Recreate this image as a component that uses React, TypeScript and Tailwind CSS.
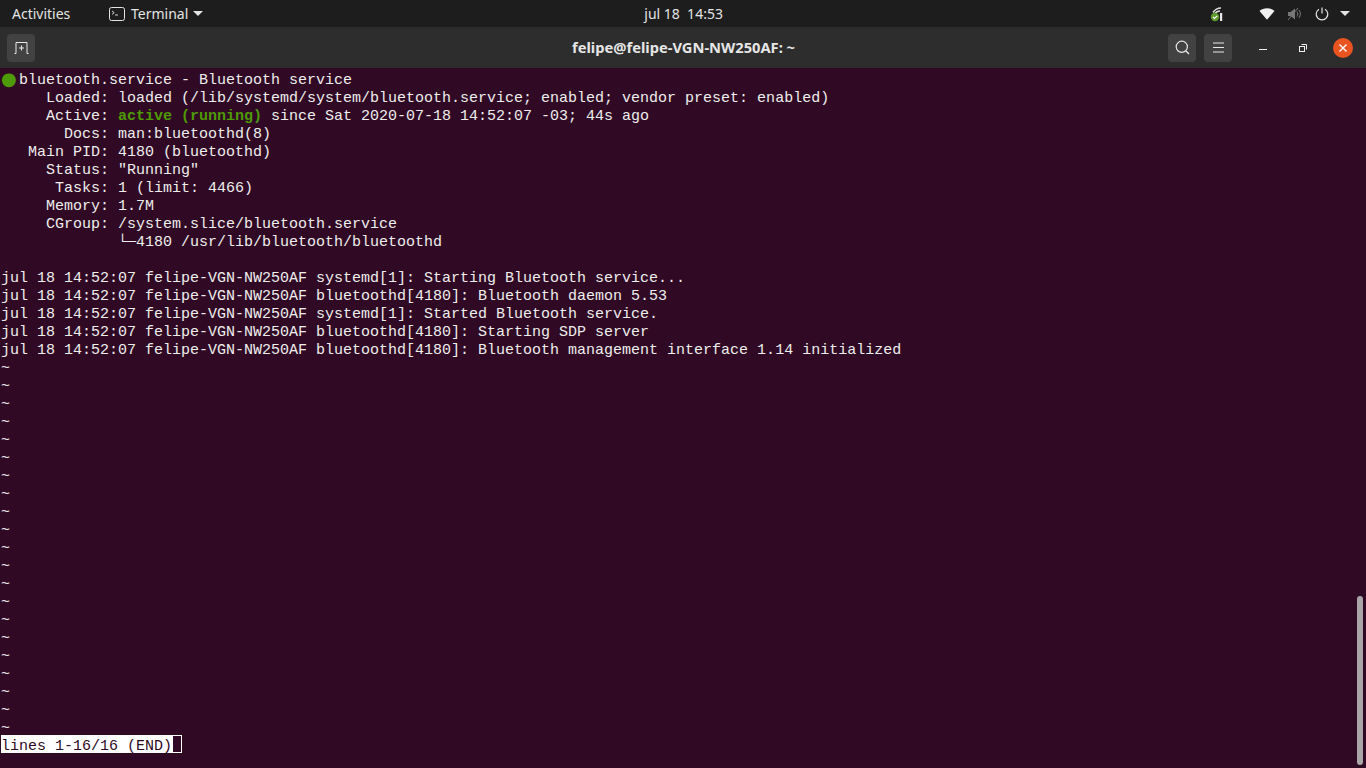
import React from 'react';

const uiFont = { fontFamily: '"Noto Sans", sans-serif' };

const serviceLines = [
  '     Loaded: loaded (/lib/systemd/system/bluetooth.service; enabled; vendor preset: enabled)',
];

const detailLines = [
  '       Docs: man:bluetoothd(8)',
  '   Main PID: 4180 (bluetoothd)',
  '     Status: "Running"',
  '      Tasks: 1 (limit: 4466)',
  '     Memory: 1.7M',
  '     CGroup: /system.slice/bluetooth.service',
  '             └─4180 /usr/lib/bluetooth/bluetoothd',
  ' ',
  'jul 18 14:52:07 felipe-VGN-NW250AF systemd[1]: Starting Bluetooth service...',
  'jul 18 14:52:07 felipe-VGN-NW250AF bluetoothd[4180]: Bluetooth daemon 5.53',
  'jul 18 14:52:07 felipe-VGN-NW250AF systemd[1]: Started Bluetooth service.',
  'jul 18 14:52:07 felipe-VGN-NW250AF bluetoothd[4180]: Starting SDP server',
  'jul 18 14:52:07 felipe-VGN-NW250AF bluetoothd[4180]: Bluetooth management interface 1.14 initialized',
];

const tildes = Array.from({ length: 21 }, (_, i) => i);

function TopBar() {
  return (
    <div className="flex h-[27px] shrink-0 items-center bg-[#1d1d1d] text-[14px] text-[#e4e4e4]" style={uiFont}>
      <span className="ml-3 w-[97px]">Activities</span>
      <svg width="16" height="14" viewBox="0 0 16 14" fill="none" className="mr-[6px]">
        <rect x="0.5" y="0.5" width="15" height="13" rx="2" stroke="#e4e4e4" />
        <path d="M3 4l2.2 1.7L3 7.4M6 8h3" stroke="#e4e4e4" strokeWidth="0.9" />
      </svg>
      <span>Terminal</span>
      <span className="ml-[5px] h-0 w-0 border-x-[5px] border-t-[5px] border-x-transparent border-t-[#e4e4e4]" />
      <span className="ml-[441px] w-[78px] whitespace-pre text-center">jul 18  14:53</span>
      <div className="ml-auto flex items-center">
        <svg width="14" height="16" viewBox="0 0 14 16" className="mr-[35px]">
          <path d="M3 6.5C5 3.5 8 2 11 2" stroke="#ddd" strokeWidth="1.4" fill="none" />
          <path d="M4.5 8C6 6 8 5 10 5" stroke="#ddd" strokeWidth="1.4" fill="none" />
          <rect x="10" y="7" width="2.2" height="8" fill="#e8e8e8" />
          <circle cx="5" cy="11" r="4.2" fill="#5c9a2c" />
          <path d="M3 11l1.5 1.5L7.2 9.8" stroke="#fff" strokeWidth="1.2" fill="none" />
        </svg>
        <svg width="16" height="12" viewBox="0 0 16 12" className="mr-[12px]">
          <path d="M0.5 3C2.5 1.2 5 0.2 8 0.2s5.5 1 7.5 2.8L8 11.8z" fill="#f0f0f0" />
        </svg>
        <svg width="16" height="14" viewBox="0 0 16 14" fill="none" className="mr-[12px]">
          <path d="M1 5v4h2.5L8 12.5v-11L3.5 5z" fill="#777" />
          <path d="M10 4.5c1 1.5 1 3.5 0 5M12 3c1.8 2.4 1.8 5.6 0 8" stroke="#777" />
          <path d="M1 13L11 1" stroke="#777" />
        </svg>
        <svg width="14" height="14" viewBox="0 0 14 14" fill="none" className="mr-[11px]">
          <path d="M7 0.5v6" stroke="#e4e4e4" strokeWidth="1.2" />
          <path d="M4 2.2a5.8 5.8 0 1 0 6 0" stroke="#e4e4e4" strokeWidth="1.2" />
        </svg>
        <span className="mr-[16px] h-0 w-0 border-x-[5px] border-t-[5px] border-x-transparent border-t-[#e4e4e4]" />
      </div>
    </div>
  );
}

function HeaderButton({ children, className }: { children: React.ReactNode; className?: string }) {
  return (
    <div className={`flex h-[28px] w-[28px] items-center justify-center rounded-[4px] bg-[#424242] ${className ?? ''}`}>
      {children}
    </div>
  );
}

function TitleBar() {
  return (
    <div className="flex h-[41px] shrink-0 items-center bg-[#2d2d2d] pl-[7px]" style={uiFont}>
      <HeaderButton>
        <svg width="15" height="12" viewBox="0 0 15 12" fill="none" stroke="#e8e8e8">
          <path d="M0.5 11.5h1.5V0.5h11v11h1.5" />
          <path d="M7.5 3.5v5M5 6h5" strokeWidth="1.1" />
        </svg>
      </HeaderButton>
      <div className="ml-[164px] flex-1 text-center text-[14.7px] font-bold text-[#e6e6e6]">felipe@felipe-VGN-NW250AF: ~</div>
      <HeaderButton className="mr-2">
        <svg width="15" height="15" viewBox="0 0 15 15" fill="none" stroke="#e8e8e8">
          <circle cx="6.8" cy="6.8" r="5.6" strokeWidth="1.2" />
          <path d="M11 11l3 3" strokeWidth="1.4" />
        </svg>
      </HeaderButton>
      <HeaderButton className="mr-[27px]">
        <svg width="11" height="11" viewBox="0 0 11 11" stroke="#e8e8e8">
          <path d="M0 1h11M0 5.5h11M0 10h11" />
        </svg>
      </HeaderButton>
      <span className="mr-[32px] mt-[4px] h-[1px] w-[8px] bg-[#f0f0f0]" />
      <svg width="8" height="8" viewBox="0 0 8 8" fill="none" stroke="#f0f0f0" className="mr-[26px]">
        <rect x="0.5" y="2.5" width="5" height="5" />
        <path d="M2.5 0.5h5v5" />
      </svg>
      <div className="mr-[13px] flex h-[20px] w-[20px] items-center justify-center rounded-full bg-[#e95420]">
        <svg width="8" height="8" viewBox="0 0 8 8" stroke="#fff" strokeWidth="1.4">
          <path d="M0.5 0.5l7 7M7.5 0.5l-7 7" />
        </svg>
      </div>
    </div>
  );
}

export default function App() {
  return (
    <div className="flex h-screen w-full flex-col overflow-hidden bg-[#300a24]">
      <TopBar />
      <TitleBar />

      {/* Terminal */}
      <main className="relative flex-1 pl-[1px] pt-[4px] font-['Liberation_Mono',monospace] text-[15px] leading-[18px] whitespace-pre text-[#eeeeec]">
        <div className="h-[18px]">
          <span className="mr-[3px] inline-block h-[14px] w-[15px] text-center align-top font-['DejaVu_Sans',sans-serif] text-[18px] leading-[14px] text-[#4e9a06]">●</span>
          bluetooth.service - Bluetooth service
        </div>
        {serviceLines.map((line) => (
          <div key={line}>{line}</div>
        ))}
        <div>
          {'     Active: '}
          <span className="font-bold text-[#4e9a06]">active (running)</span>
          {' since Sat 2020-07-18 14:52:07 -03; 44s ago'}
        </div>
        {detailLines.map((line, i) => (
          <div key={i}>{line}</div>
        ))}
        {tildes.map((i) => (
          <div key={i}>~</div>
        ))}
        <div className="-mt-[3px] flex">
          <span className="h-[18px] bg-white leading-[24px] text-[#300a24]">lines 1-16/16 (END)</span>
          <span className="h-[18px] w-[10px] border border-white" />
        </div>

        {/* Scrollbar overlay */}
        <div className="absolute right-[3px] top-[528px] h-[169px] w-[6px] rounded-full bg-[#aaa6a8]" />
      </main>
    </div>
  );
}
